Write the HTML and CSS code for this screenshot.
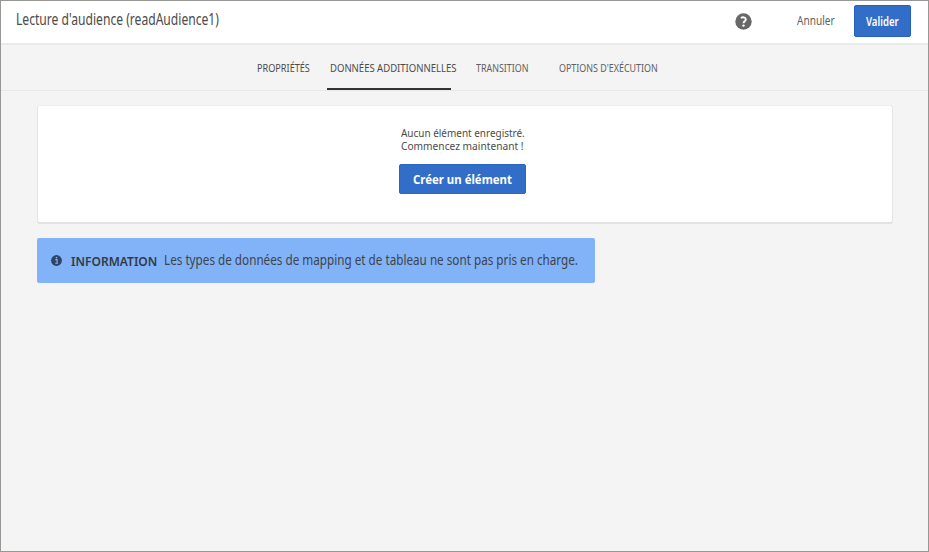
FILE: index.html
```html
<!DOCTYPE html>
<html lang="fr">
<head>
<meta charset="utf-8">
<title>Lecture d'audience</title>
<link rel="stylesheet" href="styles.css">
</head>
<body>
<div class="window">
  <header class="topbar">
    <h1 class="title"><span>Lecture d'audience (readAudience1)</span></h1>
    <svg class="help" viewBox="0 0 17 17" aria-hidden="true"><circle cx="8.5" cy="8.5" r="8.2" fill="#686868"/><path d="M5.9 5.1C7.5 3.9 10.8 3.9 10.8 6.4C10.8 8.2 8.5 8.3 8.5 10.2" fill="none" stroke="#fff" stroke-width="1.9"/><circle cx="8.5" cy="12.6" r="1.2" fill="#fff"/></svg>
    <button class="cancel"><span>Annuler</span></button>
    <button class="confirm"><span>Valider</span></button>
  </header>
  <nav class="tabs">
    <a class="tab tab-props"><span>PROPRIÉTÉS</span></a>
    <a class="tab tab-data"><span>DONNÉES ADDITIONNELLES</span></a>
    <a class="tab tab-transition"><span>TRANSITION</span></a>
    <a class="tab tab-options"><span>OPTIONS D'EXÉCUTION</span></a>
  </nav>
  <main>
    <section class="panel">
      <p class="empty"><span class="line1">Aucun élément enregistré.</span><span class="line2">Commencez maintenant !</span></p>
      <button class="create"><span>Créer un élément</span></button>
    </section>
    <aside class="notice">
      <svg class="info" viewBox="0 0 11 11" aria-hidden="true"><circle cx="5.5" cy="5.5" r="5.4" fill="#2d4464"/><path d="M4.3 4.6H6.1V8.2M4.2 8.3H7" fill="none" stroke="#83b3f8" stroke-width="1.1"/><circle cx="5.5" cy="2.6" r=".85" fill="#83b3f8"/></svg>
      <strong class="label"><span>INFORMATION</span></strong>
      <p class="message"><span>Les types de données de mapping et de tableau ne sont pas pris en charge.</span></p>
    </aside>
  </main>
</div>
</body>
</html>
```
FILE: styles.css
```css
* { box-sizing: border-box; }
body { margin: 0; font-family: "Noto Sans", sans-serif; color: #4b4b4b; }
h1, p { margin: 0; font-weight: 400; }
button { border: 0; padding: 0; margin: 0; background: none; font-family: inherit; display: block; text-align: left; }
span { display: block; width: max-content; white-space: nowrap; transform-origin: 0 50%; }
svg { display: block; flex: none; }

.window { height: 552px; border: 1px solid #979793; background: #f4f4f4; overflow: hidden; }

.topbar { display: flex; height: 44px; background: #fff; border-bottom: 2px solid #eaeaea; }
.title { width: 719px; padding: 7px 0 0 15px; font-size: 15.5px; line-height: 22px; }
.title span { transform: scaleX(.781); }
.help { width: 17px; height: 17px; margin: 12px 0 0 15px; }
.cancel { width: 102px; height: 39px; padding-left: 44px; font-size: 12px; color: #606060; }
.cancel span { transform: translateX(1px) scaleX(.84); }
.confirm { width: 57px; height: 32px; margin-top: 4px; padding-left: 11px; border: 1px solid #2560bd; border-radius: 2px; background: #326ec8; color: #fff; font-size: 12px; font-weight: 600; }
.confirm span { transform: translateY(-.5px) scaleX(.8); }

.tabs { display: flex; height: 46px; padding-left: 256px; border-bottom: 1px solid #e8e8e8; font-size: 11px; line-height: 16px; color: #606060; }
.tab { height: 45px; padding-top: 15px; }
.tab-props { width: 70px; color: #4b4b4b; }
.tab-props span { transform: scaleX(.83); }
.tab-data { width: 124px; padding-left: 3px; border-bottom: 2px solid #333; color: #4b4b4b; }
.tab-data span { transform: scaleX(.865); }
.tab-transition { width: 108px; padding-left: 25px; }
.tab-transition span { transform: scaleX(.81); }
.tab-options span { transform: scaleX(.81); }

main { padding: 14px 35px 0 36px; }
.panel { height: 119px; padding: 20px 0 0 361px; border: 1px solid #e5e5e5; border-top-color: #eee; border-bottom: 2px solid #e2e2e2; border-radius: 3px; background: #fff; }
.empty { padding-left: 2px; font-size: 11px; line-height: 13px; }
.line1 { transform: scaleX(.905); }
.line2 { transform: scaleX(.925); }
.create { width: 127px; height: 30px; margin-top: 12px; padding-left: 13px; border: 1px solid #2a66c3; border-radius: 2px; background: #326ec8; color: #fff; font-size: 12px; font-weight: 700; }
.create span { transform: scaleX(.95); }

.notice { display: flex; width: 558px; height: 45px; margin-top: 14px; padding-left: 14px; border-radius: 2px; background: #82b3f9; color: #3d434b; line-height: 20px; }
.info { width: 11px; height: 11px; margin-top: 17px; }
.label { width: 102px; padding: 13px 0 0 9px; font-size: 13px; font-weight: 600; color: #333a43; }
.label span { transform: scaleX(.925); }
.message { width: 414px; padding-top: 12px; font-size: 13.5px; }
.message span { transform: scaleX(.867); }
```
